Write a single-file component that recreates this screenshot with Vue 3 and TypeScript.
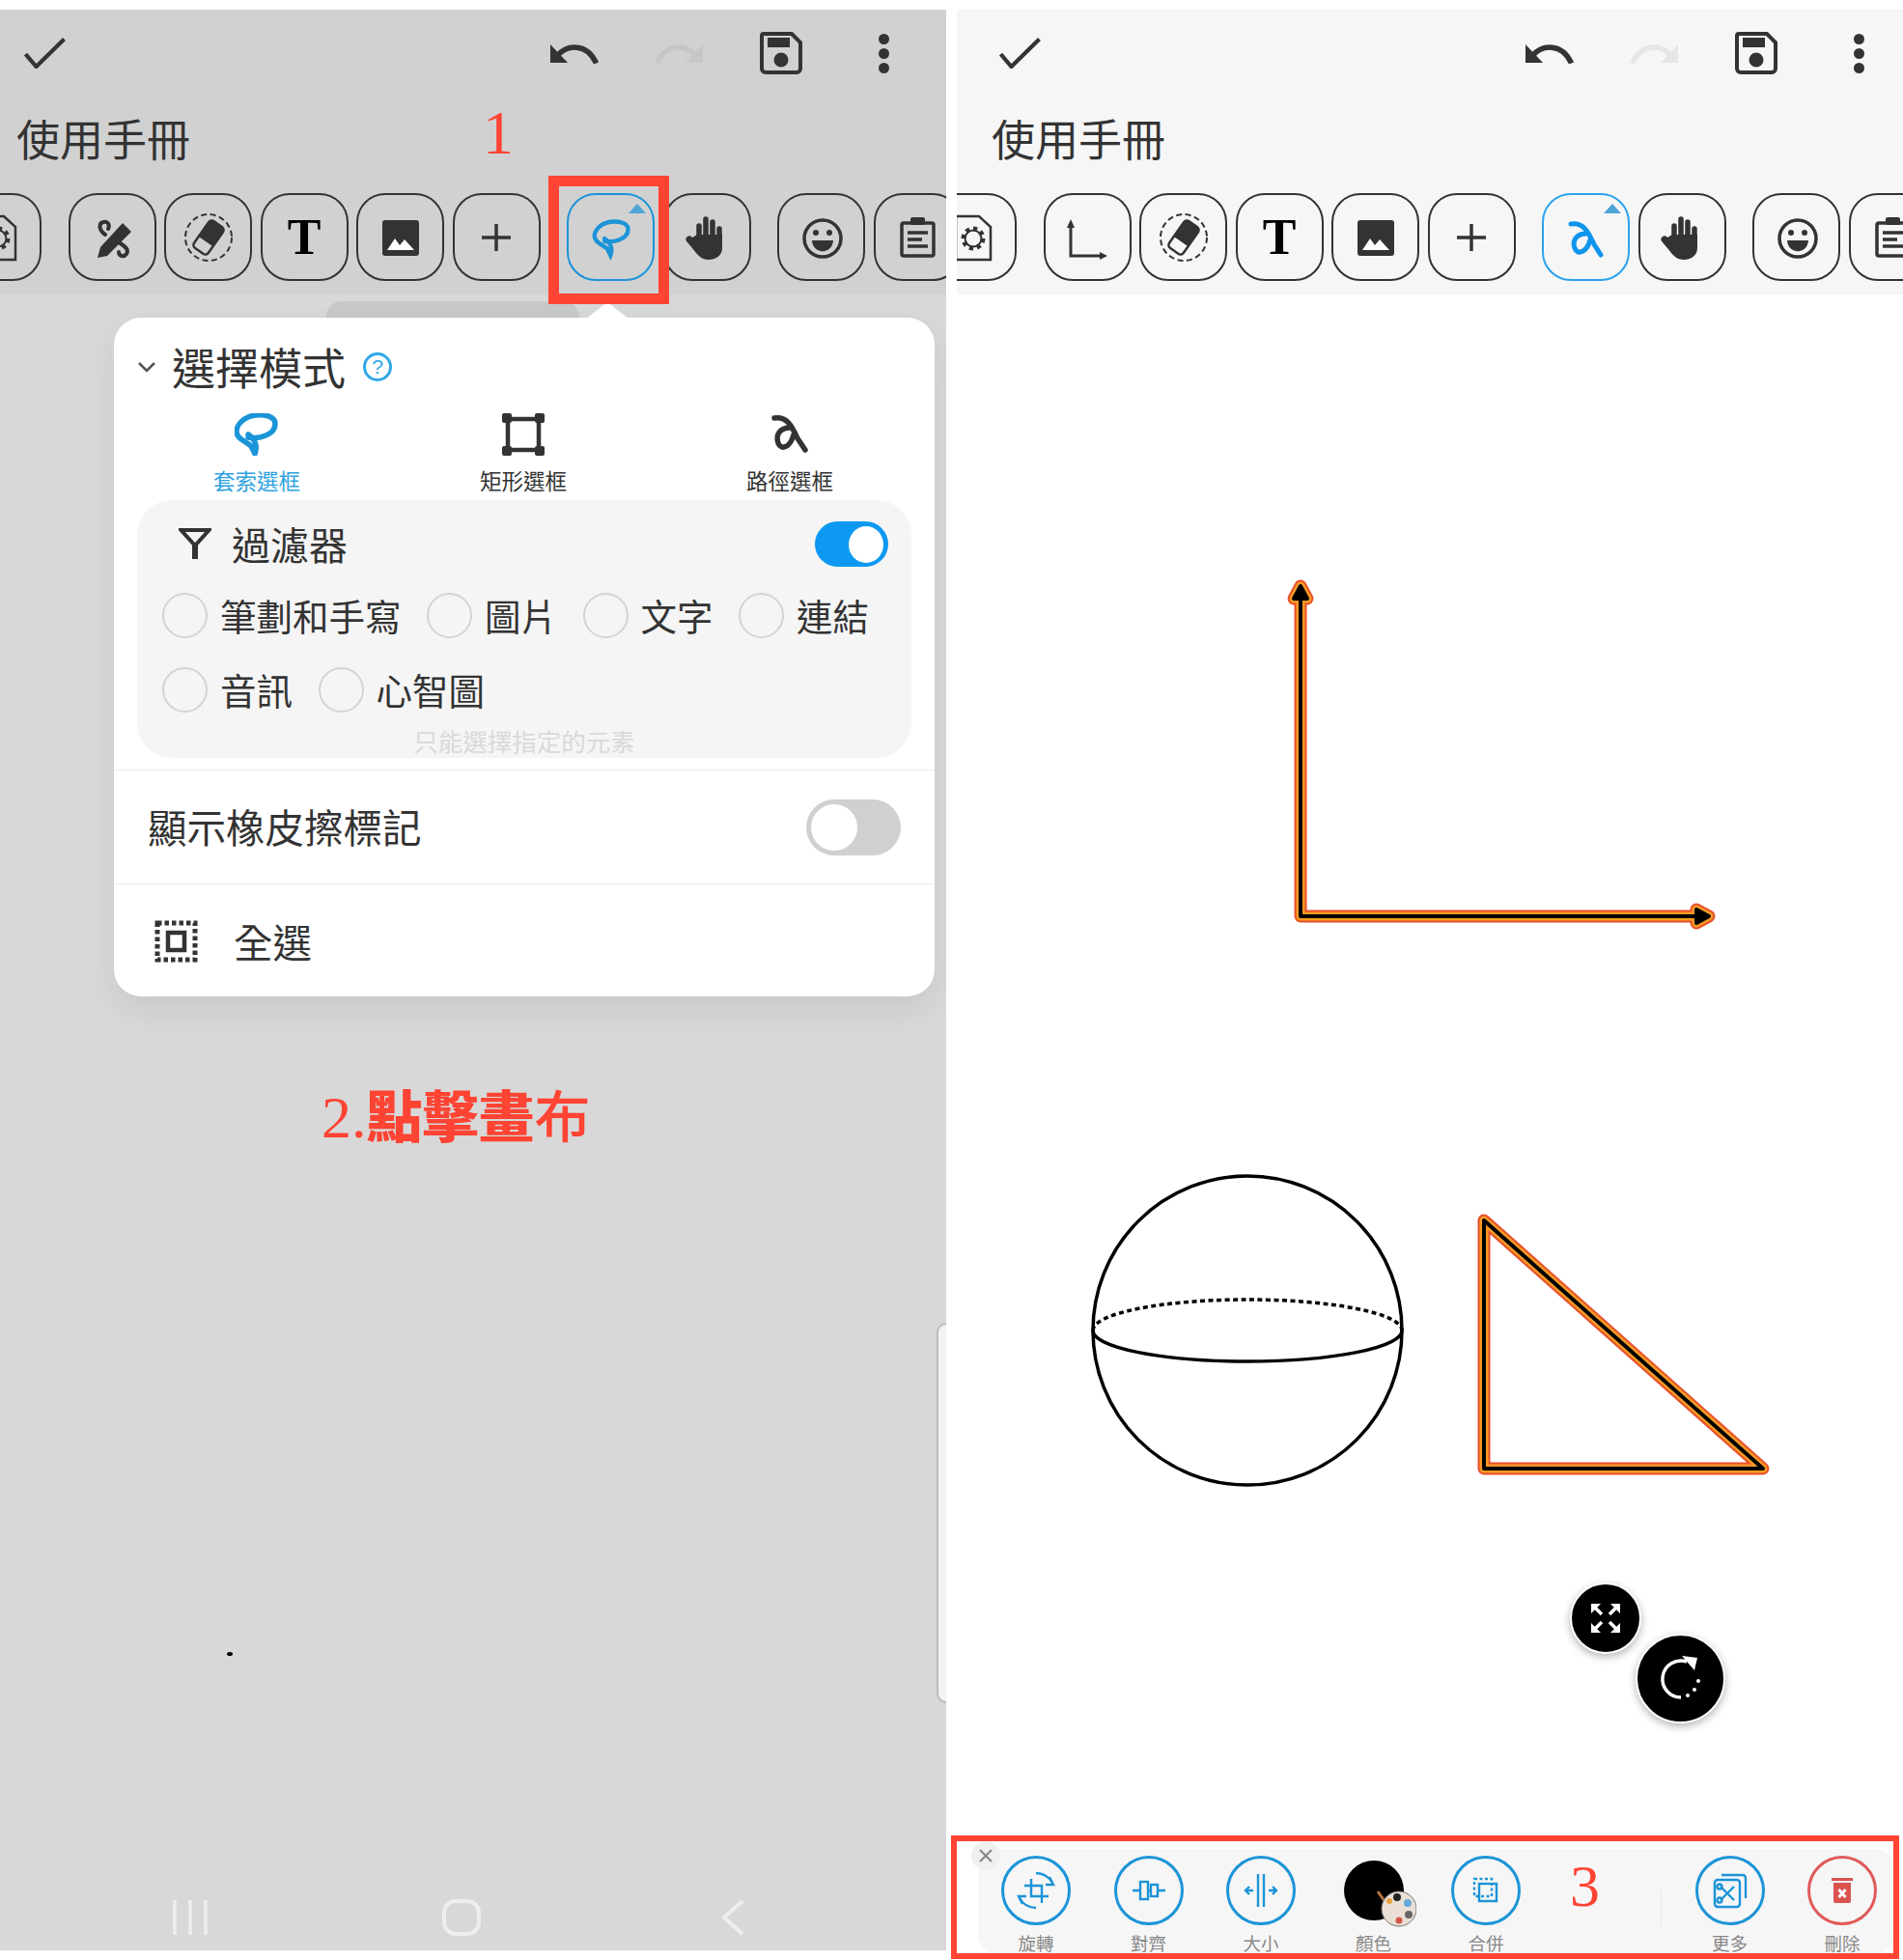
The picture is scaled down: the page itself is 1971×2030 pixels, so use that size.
<template>
  <div class="page">
    <section v-for="phone in phones" :key="phone.id" class="phone" :class="phone.id">
      <!-- Top bar -->
      <header class="topbar">
        <div class="topbar-inner">
          <div class="actions">
            <svg class="ic-check" width="43" height="32" viewBox="0 0 43 32" fill="none">
              <path d="M1.5 17L12.5 30L41.5 1.5" stroke="#333" stroke-width="4.2" />
            </svg>
            <div class="actions-right">
              <svg width="51" height="22" viewBox="0 0 51 22" fill="none">
                <path d="M8 14C18 2 39 0 48.5 21.5" stroke="#333" stroke-width="5.5" />
                <path d="M1 2V21H19Z" fill="#333" />
              </svg>
              <svg class="redo" width="51" height="22" viewBox="0 0 51 22" fill="none">
                <path d="M43 14C33 2 12 0 2.5 21.5" stroke="currentColor" stroke-width="5.5" />
                <path d="M50 2V21H32Z" fill="currentColor" />
              </svg>
              <svg width="44" height="44" viewBox="0 0 44 44" fill="none">
                <path d="M4 2H33L42 11V38a4 4 0 0 1-4 4H6a4 4 0 0 1-4-4V4a2 2 0 0 1 2-2Z" stroke="#333" stroke-width="4" />
                <rect x="8" y="6" width="23" height="10" fill="#333" />
                <circle cx="22" cy="29" r="7.5" fill="#333" />
              </svg>
              <span class="dots"><i /><i /><i /></span>
            </div>
          </div>
          <h1 class="doc-title">使用手冊</h1>
          <div class="tools">
            <button
              v-for="tool in phone.tools"
              :key="tool"
              class="tool"
              :class="{ active: tool === phone.active, 'group-start': groupStarts.includes(tool) }"
            >
              <span v-if="tool === phone.active" class="tool-flag" />
              <span v-if="tool === 'text'" class="tool-t">T</span>
              <svg v-else width="86" height="86" viewBox="2 2 86 86" fill="none">
                <g v-if="tool === 'file'">
                  <path d="M27 23H51L63 34V68H27Z" stroke="#333" stroke-width="2.5" />
                  <circle cx="45" cy="46" r="10" stroke="#333" stroke-width="5" stroke-dasharray="4 3.8" />
                  <circle cx="45" cy="46" r="8.5" stroke="#333" stroke-width="2" />
                </g>
                <g v-else-if="tool === 'pen'">
                  <path d="M56 30L65 39L40 64L30 66L33 55Z" fill="#333" />
                  <path d="M38 42C31 37 31 30 36 29C41 28 43 32 41 36" stroke="#333" stroke-width="4" stroke-linecap="round" />
                  <path d="M52 50C58 54 63 57 60 62C57 66 52 64 52 60" stroke="#333" stroke-width="4" stroke-linecap="round" />
                </g>
                <g v-else-if="tool === 'axis'">
                  <path d="M28 32V64H62" stroke="#333" stroke-width="3" />
                  <path d="M28 26L24 35H32Z" fill="#333" />
                  <path d="M66 64L58 60V68Z" fill="#333" />
                </g>
                <g v-else-if="tool === 'eraser'">
                  <circle cx="45" cy="45" r="24" stroke="#333" stroke-width="2" stroke-dasharray="6 3.5" />
                  <g transform="rotate(35 45 45)">
                    <rect x="36" y="28" width="18" height="34" rx="4" stroke="#333" stroke-width="2.5" />
                    <path d="M36 32a4 4 0 0 1 4-4h10a4 4 0 0 1 4 4V50H36Z" fill="#333" />
                  </g>
                </g>
                <g v-else-if="tool === 'image'">
                  <rect x="26" y="27" width="38" height="37" rx="3" fill="#333" />
                  <path d="M31 58L39 46L44 53L49 47L59 58Z" fill="#fff" />
                </g>
                <path v-else-if="tool === 'plus'" d="M45 31V59M30 45H60" stroke="#333" stroke-width="3.5" />
                <path
                  v-else-if="tool === 'lasso'"
                  d="M14 25C24 27 42 23 42 11C42 3 31 1 21 2C9 4 2 12 2 19C2 27 12 29 17 34L21 42C24 34 21 26 14 22"
                  transform="translate(26 27) scale(.87)"
                  stroke="currentColor"
                  stroke-width="5"
                  stroke-linecap="round"
                />
                <g v-else-if="tool === 'path'" stroke="currentColor" stroke-width="5" stroke-linecap="round">
                  <path d="M29 31C42 29 47 39 53 52L60 63" />
                  <path d="M45 41C35 41 30 48 33 56C36 64 46 60 49 47" />
                </g>
                <g v-else-if="tool === 'hand'">
                  <path d="M35 42H61V56C61 64 54 68 47 68C40 68 36 64 32 58L25 48" fill="#333" />
                  <path d="M37 46V33M44 46V26M51 46V29M58 48V36" stroke="#333" stroke-width="5.5" stroke-linecap="round" />
                  <path d="M27 47L38 60" stroke="#333" stroke-width="7" stroke-linecap="round" />
                </g>
                <g v-else-if="tool === 'emoji'">
                  <circle cx="46" cy="46" r="19" stroke="#333" stroke-width="3.5" />
                  <circle cx="39" cy="40" r="3" fill="#333" />
                  <circle cx="53" cy="40" r="3" fill="#333" />
                  <path d="M35 48H57C56 63 36 63 35 48Z" fill="#333" />
                </g>
                <g v-else-if="tool === 'clip'">
                  <rect x="29" y="30" width="33" height="34" rx="2" stroke="#333" stroke-width="3.5" />
                  <rect x="38" y="24" width="15" height="8" rx="2" fill="#333" />
                  <path d="M35 40H56M35 47H50M35 54H56" stroke="#333" stroke-width="3.5" />
                </g>
              </svg>
            </button>
          </div>
        </div>
      </header>

      <!-- Left: dimmed canvas with the selection popover -->
      <template v-if="phone.id === 'left'">
        <div class="canvas">
          <span class="canvas-dot" />
          <span class="side-handle" />
        </div>
        <nav class="navbar">
          <svg width="36" height="38" viewBox="0 0 36 38" fill="none">
            <path d="M2 1V37M18 1V37M34 1V37" stroke="#eee" stroke-width="3.5" />
          </svg>
          <svg class="nav-home" width="40" height="38" viewBox="0 0 40 38" fill="none">
            <rect x="2" y="2" width="36" height="34" rx="12" stroke="#eee" stroke-width="4" />
          </svg>
          <svg class="nav-back" width="24" height="38" viewBox="0 0 24 38" fill="none">
            <path d="M22 2L3 19L22 36" stroke="#eee" stroke-width="4" />
          </svg>
        </nav>

        <span class="pop-tab" />
        <div class="popover">
          <span class="pop-caret" />
          <div class="pop-head">
            <svg width="20" height="12" viewBox="0 0 20 12" fill="none">
              <path d="M2 2L10 10L18 2" stroke="#555" stroke-width="2.6" />
            </svg>
            <h2 class="pop-title">選擇模式</h2>
            <span class="help">?</span>
          </div>

          <div class="modes">
            <div class="mode mode-active">
              <svg width="46" height="44" viewBox="0 0 46 44" fill="none">
                <path
                  d="M14 25C24 27 42 23 42 11C42 3 31 1 21 2C9 4 2 12 2 19C2 27 12 29 17 34L21 42C24 34 21 26 14 22"
                  stroke="#1b94d8"
                  stroke-width="5.5"
                  stroke-linecap="round"
                />
              </svg>
              <span>套索選框</span>
            </div>
            <div class="mode">
              <svg width="44" height="44" viewBox="0 0 44 44" fill="#333">
                <path d="M6 6H38V38H6Z" fill="none" stroke="#333" stroke-width="4.5" />
                <rect width="10" height="10" rx="2" />
                <rect x="34" width="10" height="10" rx="2" />
                <rect y="34" width="10" height="10" rx="2" />
                <rect x="34" y="34" width="10" height="10" rx="2" />
              </svg>
              <span>矩形選框</span>
            </div>
            <div class="mode">
              <svg width="44" height="44" viewBox="0 0 44 44" fill="none" stroke="#333" stroke-width="5.5" stroke-linecap="round">
                <path d="M6 5C19 3 24 13 30 26L38 38" />
                <path d="M22 15C12 15 7 22 10 31C13 39 23 35 26 22" />
              </svg>
              <span>路徑選框</span>
            </div>
          </div>

          <div class="filter-panel">
            <div class="filter-head">
              <svg width="34" height="33" viewBox="0 0 34 33" fill="none">
                <path d="M2.5 2H31.5L17 18Z" stroke="#333" stroke-width="4" />
                <path d="M17 16V32" stroke="#333" stroke-width="6" />
              </svg>
              <span class="filter-title">過濾器</span>
              <span class="switch-on"><i /></span>
            </div>
            <div v-for="(row, i) in filterRows" :key="i" class="radio-row">
              <label v-for="item in row" :key="item" class="radio">
                <span class="radio-dot" />
                {{ item }}
              </label>
            </div>
            <p class="filter-hint">只能選擇指定的元素</p>
          </div>

          <div class="pop-row">
            <span>顯示橡皮擦標記</span>
            <span class="switch-off"><i /></span>
          </div>
          <div class="pop-row select-all">
            <svg width="45" height="44" viewBox="0 0 45 44" fill="none">
              <rect x="3" y="3" width="39" height="38" stroke="#333" stroke-width="5" stroke-dasharray="4.5 3" />
              <rect x="14" y="13" width="17" height="18" stroke="#333" stroke-width="4.5" />
            </svg>
            <span>全選</span>
          </div>
        </div>
      </template>

      <!-- Right: canvas with selected shapes and the action bar -->
      <template v-else>
        <div class="canvas">
          <svg class="drawing" width="980" height="1610" viewBox="991 305 980 1610" fill="none">
            <g v-for="layer in outline" :key="layer.color" :stroke="layer.color" :stroke-width="layer.width" stroke-linejoin="round">
              <path d="M1347 618V949H1758" />
              <path d="M1347 607L1340 620H1354Z" :fill="layer.color" />
              <path d="M1770 949L1757 942V956Z" :fill="layer.color" />
              <path d="M1537 1264V1521H1826Z" />
            </g>
            <circle cx="1292" cy="1378" r="160" stroke="#000" stroke-width="3.5" />
            <path d="M1132 1378A160 32 0 0 1 1452 1378" stroke="#000" stroke-width="3.5" stroke-dasharray="5 3.5" />
            <path d="M1132 1378A160 32 0 0 0 1452 1378" stroke="#000" stroke-width="3.5" />
          </svg>

          <button class="fab fab-small">
            <svg width="34" height="34" viewBox="0 0 34 34" fill="#fff" stroke="none">
              <path d="M2 2H12L2 12ZM32 2V12L22 2ZM2 32V22L12 32ZM32 32H22L32 22Z" />
              <path d="M5 5L13 13M29 5L21 13M5 29L13 21M29 29L21 21" stroke="#fff" stroke-width="3.5" />
            </svg>
          </button>
          <button class="fab fab-large">
            <svg width="48" height="48" viewBox="0 0 48 48" fill="none">
              <path d="M30 6A19 19 0 1 0 24 43" stroke="#fff" stroke-width="3.5" />
              <path d="M25 0L41 2L38 15Z" fill="#fff" />
              <circle cx="31" cy="41" r="2" fill="#fff" />
              <circle cx="38" cy="35" r="2" fill="#fff" />
              <circle cx="42" cy="26" r="2" fill="#fff" />
            </svg>
          </button>
        </div>

        <footer class="action-bar">
          <span class="bar-close">
            <svg width="14" height="14" viewBox="0 0 14 14" fill="none">
              <path d="M1 1L13 13M13 1L1 13" stroke="#888" stroke-width="2.2" />
            </svg>
          </span>
          <span class="bar-divider" />
          <div v-for="action in actions" :key="action.id" class="action" :class="{ 'action-more': action.id === 'more' }">
            <span v-if="action.id === 'color'" class="swatch">
              <svg class="palette" width="42" height="40" viewBox="0 0 42 40" fill="none">
                <path d="M2 3L14 20" stroke="#b5743a" stroke-width="3" />
                <circle cx="24" cy="21" r="18" fill="#eadfd5" stroke="#777" stroke-width="1" />
                <circle cx="22" cy="9" r="4" fill="#222" />
                <circle cx="33" cy="15" r="4" fill="#64a9dd" />
                <circle cx="34" cy="27" r="4" fill="#666" />
                <circle cx="24" cy="33" r="3.5" fill="#d4574a" />
                <circle cx="14" cy="13" r="3" fill="#e8a13c" />
              </svg>
            </span>
            <span v-else class="action-ring" :class="{ danger: action.id === 'delete' }">
              <svg width="66" height="66" viewBox="3 3 66 66" fill="none" stroke="currentColor" stroke-width="2.4">
                <g v-if="action.id === 'rotate'">
                  <path d="M31 24V42H49M24 31H42V49" />
                  <path d="M36 18A20 20 0 0 1 53 28M36 54A20 20 0 0 1 19 44" />
                  <path d="M50 22L54 30L46 30M22 50L18 42L26 42" />
                </g>
                <g v-else-if="action.id === 'align'">
                  <path d="M19 36H27M35 36H38M45 36H53" />
                  <rect x="27" y="27" width="8" height="18" />
                  <rect x="38" y="30" width="7" height="12" />
                </g>
                <g v-else-if="action.id === 'size'">
                  <path d="M33 19V53M39 19V53M28 36H20M44 36H52" />
                  <path d="M24 32L20 36L24 40M48 32L52 36L48 40" />
                </g>
                <g v-else-if="action.id === 'merge'">
                  <rect x="29" y="29" width="18" height="18" />
                  <rect x="24" y="24" width="18" height="18" stroke-dasharray="3 2.5" />
                </g>
                <g v-else-if="action.id === 'more'">
                  <path d="M27 20H49a3 3 0 0 1 3 3V44" />
                  <rect x="20" y="25" width="26" height="28" rx="3" />
                  <path d="M26 32L40 46M40 32L26 46" />
                  <circle cx="25" cy="32" r="2.5" />
                  <circle cx="25" cy="46" r="2.5" />
                </g>
                <g v-else stroke="none">
                  <path d="M27 28H45V47a2 2 0 0 1-2 2H29a2 2 0 0 1-2-2Z" fill="currentColor" />
                  <rect x="25" y="23" width="22" height="3" fill="currentColor" />
                  <path d="M32.5 35L39.5 43M39.5 35L32.5 43" stroke="#fff" stroke-width="2.8" />
                </g>
              </svg>
            </span>
            <span class="action-label">{{ action.label }}</span>
          </div>
        </footer>
      </template>
    </section>

    <!-- Tutorial annotations -->
    <span class="mark mark-box-one" />
    <span class="mark mark-box-three" />
    <span class="mark mark-one">1</span>
    <span class="mark mark-two"><span class="mark-num">2.</span>點擊畫<span class="mark-thin">布</span></span>
    <span class="mark mark-three">3</span>
  </div>
</template>

<script setup lang="ts">
type ToolId =
  | 'file' | 'pen' | 'axis' | 'eraser' | 'text' | 'image' | 'plus'
  | 'lasso' | 'path' | 'hand' | 'emoji' | 'clip'

interface Phone {
  id: 'left' | 'right'
  tools: ToolId[]
  active: ToolId
}

const phones: Phone[] = [
  {
    id: 'left',
    tools: ['file', 'pen', 'eraser', 'text', 'image', 'plus', 'lasso', 'hand', 'emoji', 'clip'],
    active: 'lasso',
  },
  {
    id: 'right',
    tools: ['file', 'axis', 'eraser', 'text', 'image', 'plus', 'path', 'hand', 'emoji', 'clip'],
    active: 'path',
  },
]

const groupStarts: ToolId[] = ['pen', 'axis', 'lasso', 'path', 'emoji']

const filterRows = [
  ['筆劃和手寫', '圖片', '文字', '連結'],
  ['音訊', '心智圖'],
]

// selected strokes are drawn as three stacked outlines
const outline = [
  { color: '#e8502a', width: 13 },
  { color: '#f59a23', width: 9 },
  { color: '#000', width: 4 },
]

const actions = [
  { id: 'rotate', label: '旋轉' },
  { id: 'align', label: '對齊' },
  { id: 'size', label: '大小' },
  { id: 'color', label: '顏色' },
  { id: 'merge', label: '合併' },
  { id: 'more', label: '更多' },
  { id: 'delete', label: '刪除' },
]
</script>

<style>
body {
  margin: 0;
  background: #fff;
}
</style>

<style scoped>
.page {
  position: relative;
  display: flex;
  width: 1971px;
  height: 2030px;
  padding-top: 10px;
  box-sizing: border-box;
  overflow: hidden;
  background: #fff;
  font-family: "Noto Sans CJK TC", "Noto Sans", sans-serif;
  color: #333;
}

.phone {
  position: relative;
  display: flex;
  flex-direction: column;
  width: 980px;
  overflow: hidden;
}
.phone.left { height: 2010px; background: #d8d8d8; }
.phone.right { height: 2020px; margin-left: 11px; background: #fff; }

/* ── Top bar ─────────────────────────────────────────────── */
.topbar { flex-shrink: 0; height: 295px; }
.left .topbar { background: #d1d1d1; }
.right .topbar { background: #f6f6f6; }
.topbar-inner { width: 980px; }
.right .topbar-inner { margin-left: 19px; }

.actions {
  display: flex;
  align-items: center;
  height: 44px;
  padding: 23px 59px 0 25px;
}
.actions-right {
  display: flex;
  align-items: center;
  gap: 58px;
  margin-left: auto;
}
.redo { color: #c6c6c6; }
.right .redo { color: #e6e6e6; }
.dots {
  display: flex;
  flex-direction: column;
  gap: 4px;
  margin-left: 21px;
}
.dots i {
  width: 11px;
  height: 11px;
  border-radius: 50%;
  background: #333;
}

.doc-title {
  margin: 36px 0 0;
  padding-left: 17px;
  font-size: 45px;
  font-weight: 400;
  line-height: 60px;
}

.tools {
  display: flex;
  gap: 8.5px;
  margin: 27px 0 0 -48px;
}
.tool {
  position: relative;
  display: flex;
  flex-shrink: 0;
  align-items: center;
  justify-content: center;
  box-sizing: border-box;
  width: 91px;
  height: 91px;
  padding: 0;
  border: 2.5px solid #333;
  border-radius: 30px;
  background: transparent;
}
.tool.group-start { margin-left: 19px; }
.tool.active { border-color: #1b94d8; color: #1b94d8; }
.right .tool.active { color: #0f95ee; border-color: #2aa2ee; }
.tool-flag {
  position: absolute;
  top: 9px;
  right: 7px;
  width: 0;
  height: 0;
  border-left: 9px solid transparent;
  border-right: 9px solid transparent;
  border-bottom: 10px solid #4ea5d8;
}
.tool-t {
  font-family: "Liberation Serif", serif;
  font-size: 52px;
  font-weight: 700;
  line-height: 1;
}

/* ── Canvas ──────────────────────────────────────────────── */
.canvas { position: relative; flex: 1; }
.canvas-dot {
  position: absolute;
  left: 235px;
  top: 1406px;
  width: 6px;
  height: 4px;
  border-radius: 50%;
  background: #000;
}
.side-handle {
  position: absolute;
  right: 0;
  top: 1065px;
  box-sizing: border-box;
  width: 10px;
  height: 394px;
  border: 2px solid #bbb;
  border-right: none;
  border-radius: 14px 0 0 14px;
  background: #f2f2f2;
}
.drawing { position: absolute; left: 0; top: 0; }

.fab {
  position: absolute;
  display: flex;
  align-items: center;
  justify-content: center;
  box-sizing: border-box;
  padding: 0;
  border: 2px solid #fff;
  border-radius: 50%;
  background: #000;
  box-shadow: 0 3px 8px rgba(0, 0, 0, 0.3);
}
.fab-small { left: 635px; top: 1334px; width: 74px; height: 74px; }
.fab-large { left: 703px; top: 1387px; width: 93px; height: 93px; }

/* ── Navigation bar ──────────────────────────────────────── */
.navbar {
  display: flex;
  align-items: center;
  flex-shrink: 0;
  height: 38px;
  padding: 0 0 15px 179px;
}
.nav-home { margin-left: 243px; }
.nav-back { margin-left: 249px; }

/* ── Selection popover ───────────────────────────────────── */
.pop-tab {
  position: absolute;
  left: 338px;
  top: 302px;
  width: 262px;
  height: 30px;
  border-radius: 16px 16px 0 0;
  background: #c8c8c8;
}
.popover {
  position: absolute;
  left: 118px;
  top: 319px;
  width: 850px;
  height: 703px;
  border-radius: 28px;
  background: #fff;
  box-shadow: 0 14px 34px rgba(0, 0, 0, 0.07);
}
.pop-caret {
  position: absolute;
  left: 489px;
  top: -16px;
  width: 0;
  height: 0;
  border-left: 22px solid transparent;
  border-right: 22px solid transparent;
  border-bottom: 17px solid #fff;
}
.pop-head {
  display: flex;
  align-items: center;
  height: 44px;
  padding: 29px 0 0 24px;
}
.pop-title {
  margin: 0 0 0 16px;
  font-size: 45px;
  font-weight: 400;
  line-height: 44px;
}
.help {
  display: flex;
  align-items: center;
  justify-content: center;
  box-sizing: border-box;
  width: 30px;
  height: 30px;
  margin-left: 18px;
  border: 3px solid #2fa8e8;
  border-radius: 50%;
  color: #2fa8e8;
  font-family: "Liberation Sans", sans-serif;
  font-size: 21px;
}

.modes {
  display: grid;
  grid-template-columns: repeat(3, 276px);
  margin-top: 26px;
  padding: 0 10px;
}
.mode {
  display: flex;
  flex-direction: column;
  align-items: center;
}
.mode span {
  margin-top: 12px;
  font-size: 22.5px;
  line-height: 26px;
}
.mode-active span { color: #2fa3e0; }

.filter-panel {
  box-sizing: border-box;
  height: 267px;
  margin: 8px 24px 12px;
  padding-top: 22px;
  border-radius: 36px;
  background: #f5f5f5;
}
.filter-head {
  display: flex;
  align-items: center;
  height: 47px;
  padding: 0 24px 0 43px;
}
.filter-title {
  margin-left: 21px;
  font-size: 40px;
  line-height: 47px;
}
.switch-on {
  display: flex;
  justify-content: flex-end;
  align-items: center;
  box-sizing: border-box;
  width: 76px;
  height: 47px;
  margin-left: auto;
  padding: 0 5px;
  border-radius: 24px;
  background: #0d99f2;
}
.switch-on i {
  width: 36px;
  height: 38px;
  border-radius: 50%;
  background: #fff;
}
.radio-row {
  display: flex;
  gap: 26.5px;
  height: 48px;
  margin-top: 29px;
  padding-left: 26px;
}
.filter-head + .radio-row { margin-top: 26px; }
.radio {
  display: flex;
  align-items: center;
  gap: 13px;
  font-size: 37.5px;
  line-height: 48px;
}
.radio-dot {
  box-sizing: border-box;
  width: 47px;
  height: 47px;
  border: 2.5px solid #d4d4d4;
  border-radius: 50%;
}
.filter-hint {
  margin: 16px 0 0;
  color: #d9d9d9;
  font-size: 25.5px;
  line-height: 26px;
  text-align: center;
}

.pop-row {
  display: flex;
  align-items: center;
  justify-content: space-between;
  height: 117px;
  padding: 0 35px 0 35px;
  border-top: 1.5px solid #ebebeb;
  font-size: 40.5px;
}
.pop-row > span:first-child { margin-top: -2px; }
.pop-row.select-all {
  justify-content: flex-start;
  gap: 37px;
  padding-left: 42px;
}
.switch-off {
  display: flex;
  align-items: center;
  box-sizing: border-box;
  width: 98px;
  height: 58px;
  padding: 0 5px;
  border-radius: 29px;
  background: #d0d0d0;
}
.switch-off i {
  width: 48px;
  height: 48px;
  border-radius: 50%;
  background: #fff;
}

/* ── Action bar ──────────────────────────────────────────── */
.action-bar {
  position: relative;
  display: flex;
  flex-shrink: 0;
  gap: 44.5px;
  box-sizing: border-box;
  width: 949px;
  height: 108px;
  margin: 0 0 7px 22px;
  padding: 7px 0 0 24px;
  border-radius: 20px;
  background: #f6f6f6;
}
.bar-close {
  position: absolute;
  left: -7px;
  top: -8px;
  display: flex;
  align-items: center;
  justify-content: center;
  width: 30px;
  height: 30px;
  border-radius: 50%;
  background: #f0f0f0;
}
.bar-divider {
  position: absolute;
  left: 707px;
  top: 42px;
  width: 1px;
  height: 38px;
  background: #ebebeb;
}
.action {
  display: flex;
  flex-direction: column;
  align-items: center;
  width: 72px;
}
.action-more { margin-left: 136px; }
.action-ring {
  display: flex;
  align-items: center;
  justify-content: center;
  box-sizing: border-box;
  width: 72px;
  height: 72px;
  border: 3px solid #1b94d8;
  border-radius: 50%;
  color: #1b94d8;
}
.action-ring.danger { border-color: #e05a5a; color: #d9534f; }
.swatch {
  position: relative;
  width: 62px;
  height: 62px;
  margin: 5px 0;
  border-radius: 50%;
  background: #000;
}
.palette { position: absolute; left: 33px; top: 29px; }
.action-label {
  margin-top: 9px;
  color: #888;
  font-size: 18.5px;
  line-height: 18px;
}

/* ── Tutorial annotations ────────────────────────────────── */
.mark { position: absolute; color: #ff4433; }
.mark-box-one {
  left: 568px;
  top: 182px;
  box-sizing: border-box;
  width: 125px;
  height: 133px;
  border: 11px solid #ff4433;
}
.mark-box-three {
  left: 985px;
  top: 1901px;
  box-sizing: border-box;
  width: 982px;
  height: 128px;
  border: 6px solid #ff4433;
}
.mark-one, .mark-three {
  font-family: "Liberation Serif", serif;
  font-size: 64px;
  line-height: 1;
}
.mark-one { left: 500px; top: 106px; }
.mark-three { left: 1626px; top: 1922px; font-size: 62px; }
.mark-two {
  left: 333px;
  top: 1120px;
  font-family: "Liberation Serif", "Noto Sans CJK TC", serif;
  font-size: 58px;
  font-weight: 900;
  line-height: 74px;
  white-space: nowrap;
}
.mark-num { font-size: 62px; font-weight: 400; }
.mark-thin { font-weight: 500; }
</style>
